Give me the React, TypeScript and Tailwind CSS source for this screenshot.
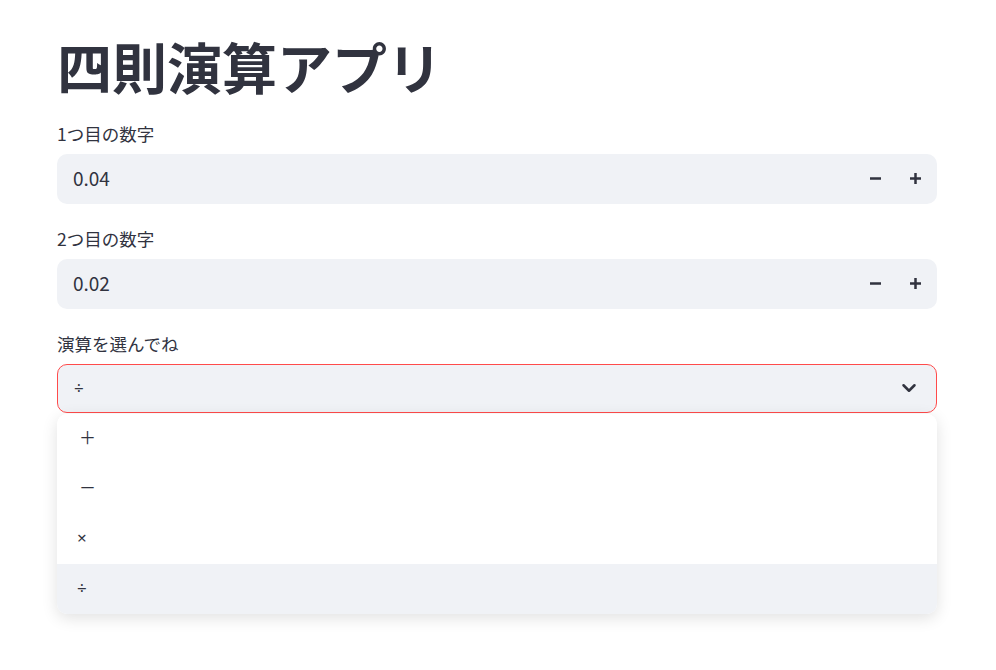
import React from "react";
import { ChevronDown } from "lucide-react";

const font = { fontFamily: '"Noto Sans CJK JP", "Noto Sans", sans-serif' };
const latin = { fontFamily: '"Noto Sans", "Noto Sans CJK JP", sans-serif' };

function Minus() {
  return (
    <svg width="13" height="13" viewBox="0 0 13 13">
      <rect x="1" y="5.25" width="11" height="2.5" fill="#31333f" />
    </svg>
  );
}
function Plus() {
  return (
    <svg width="13" height="13" viewBox="0 0 13 13">
      <rect x="1" y="5.25" width="11" height="2.5" fill="#31333f" />
      <rect x="5.25" y="1" width="2.5" height="11" fill="#31333f" />
    </svg>
  );
}

function NumberInput({ label, value }: { label: string; value: string }) {
  return (
    <div className="flex flex-col">
      <div className="h-[36px] pt-[4px] text-[17.5px] leading-[24px] text-[#31333f]">{label}</div>
      <div className="flex h-[50px] items-center rounded-[10px] bg-[#f0f2f6] pl-[16px] pr-[2px]">
        <div className="flex-1 text-[19px] text-[#31333f]">{value}</div>
        <div className="flex h-full w-[40px] items-center justify-center"><Minus /></div>
        <div className="flex h-full w-[40px] items-center justify-center"><Plus /></div>
      </div>
    </div>
  );
}

export default function App() {
  const options: { t: string; latin: boolean }[] = [
    { t: "＋", latin: false },
    { t: "－", latin: false },
    { t: "×", latin: true },
    { t: "÷", latin: true },
  ];
  return (
    <div style={font} className="min-h-[670px] w-[996px] bg-white text-[#31333f]">
      <div className="ml-[57px] flex w-[880px] flex-col gap-[19px] pt-[32px]">
        <h1 className="mb-[0.5px] text-[55px] font-bold leading-[66px] text-[#31333f]">四則演算アプリ</h1>
        <NumberInput label="1つ目の数字" value="0.04" />
        <NumberInput label="2つ目の数字" value="0.02" />
        <div className="flex flex-col">
          <div className="h-[36px] pt-[4px] text-[17.5px] leading-[24px] text-[#31333f]">演算を選んでね</div>
          <div className="relative">
            <div className="flex h-[49px] items-center rounded-[10px] border border-[#ff4b4b] bg-[#f0f2f6] pl-[16px] pr-[16px]">
              <div className="flex-1 text-[17px]" style={latin}>÷</div>
              <ChevronDown size={22} strokeWidth={2.75} color="#31333f" />
            </div>
            <div className="absolute left-0 right-0 top-[50px] z-10 overflow-hidden rounded-[10px] bg-white shadow-[0_4px_16px_rgba(0,0,0,0.12)]">
              {options.map((o, i) => (
                <div
                  key={o.t}
                  style={o.latin ? latin : undefined}
                  className={`flex h-[50px] items-center text-[17px] ${o.latin ? "pl-[20px] pb-[2px]" : "pl-[22px] pb-[4px]"} ${i === 3 ? "bg-[#f0f2f6]" : "bg-white"}`}
                >
                  {o.t}
                </div>
              ))}
            </div>
          </div>
        </div>
      </div>
    </div>
  );
}
